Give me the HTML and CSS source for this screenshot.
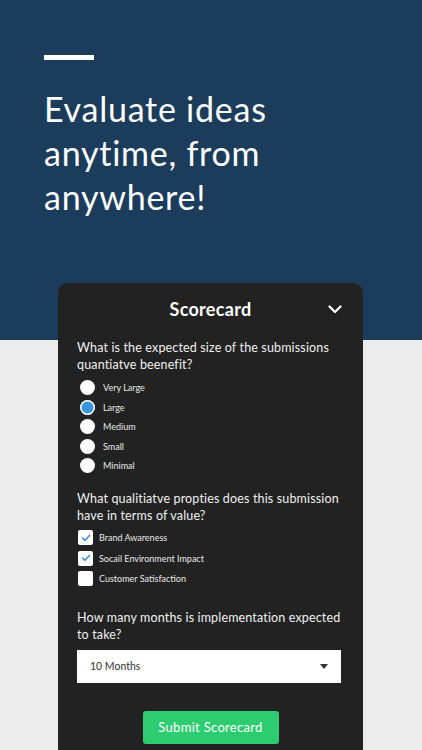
FILE: index.html
```html
<!DOCTYPE html>
<html>
<head>
<meta charset="utf-8">
<link rel="stylesheet" href="styles.css">
</head>
<body>
<div class="page">
  <header class="hero">
    <div class="bar"></div>
    <h1 class="headline">Evaluate ideas<br>anytime, from<br>anywhere!</h1>
  </header>
  <section class="card">
    <div class="card-head">
      <h2 class="card-title">Scorecard</h2>
      <svg class="chev" width="14" height="9" viewBox="0 0 14 9"><path d="M1.5 1.5 L7 7 L12.5 1.5" fill="none" stroke="#fff" stroke-width="2.2" stroke-linecap="round" stroke-linejoin="round"/></svg>
    </div>
    <p class="q">What is the expected size of the submissions quantiatve beenefit?</p>
    <ul class="radios">
      <li class="opt"><span class="radio"></span>Very Large</li>
      <li class="opt"><span class="radio on"></span>Large</li>
      <li class="opt"><span class="radio"></span>Medium</li>
      <li class="opt"><span class="radio"></span>Small</li>
      <li class="opt"><span class="radio"></span>Minimal</li>
    </ul>
    <p class="q q2">What qualitiatve propties does this submission have in terms of value?</p>
    <ul class="checks">
      <li class="copt"><span class="box"><svg width="10" height="8" viewBox="0 0 10 8"><path d="M1.5 4 L4 6.3 L8.5 1.5" fill="none" stroke="#3a8fd6" stroke-width="1.6" stroke-linecap="round" stroke-linejoin="round"/></svg></span>Brand Awareness</li>
      <li class="copt"><span class="box"><svg width="10" height="8" viewBox="0 0 10 8"><path d="M1.5 4 L4 6.3 L8.5 1.5" fill="none" stroke="#3a8fd6" stroke-width="1.6" stroke-linecap="round" stroke-linejoin="round"/></svg></span>Socail Environment Impact</li>
      <li class="copt"><span class="box"></span>Customer Satisfaction</li>
    </ul>
    <p class="q q3">How many months is implementation expected to take?</p>
    <div class="select"><span>10 Months</span><span class="caret"></span></div>
    <div class="actions"><button class="submit">Submit Scorecard</button></div>
  </section>
</div>
</body>
</html>
```
FILE: styles.css
```css
* { box-sizing: border-box; }
html, body { margin: 0; padding: 0; }
body {
  width: 422px;
  height: 750px;
  overflow: hidden;
  background: #ececec;
  font-family: Lato, "Open Sans", sans-serif;
}
.page { position: relative; }
.hero {
  background: #1b3c5b;
  height: 340px;
  padding: 55px 0 0 44px;
}
.bar { width: 50px; height: 5px; background: #fff; }
.headline {
  margin: 27px 0 0;
  color: #fff;
  font-weight: 400;
  font-size: 34px;
  line-height: 44px;
  letter-spacing: 0.75px;
}
.card {
  position: absolute;
  top: 283px;
  left: 58px;
  width: 305px;
  height: 480px;
  background: #222222;
  border-radius: 10px;
  padding: 14px 22px 0 19px;
  color: #fff;
}
.card-head {
  display: flex;
  justify-content: center;
  align-items: center;
  position: relative;
  height: 24px;
  margin-right: -3px;
}
.card-title { margin: 0; font-size: 18px; font-weight: 700; letter-spacing: 0.3px; }
.chev { position: absolute; right: 2px; top: 8px; }
.q {
  margin: 18px 0 0;
  font-size: 12.5px;
  line-height: 17px;
  color: #f0f0f0;
  letter-spacing: 0.15px;
}
.radios, .checks { list-style: none; margin: 0; padding: 0; }
.radios { margin-top: 5px; }
.opt {
  display: flex;
  align-items: center;
  height: 19.5px;
  font-size: 9px;
  color: #e8e8e8;
}
.radio {
  width: 15px; height: 15px; border-radius: 50%;
  background: #fff;
  margin: 0 8px 0 3px;
}
.radio.on { background: #3a95e0; box-shadow: inset 0 0 0 1.5px #fff; }
.q2 { margin-top: 14px; }
.checks { margin-top: 4px; }
.copt {
  display: flex;
  align-items: center;
  height: 20.5px;
  font-size: 9px;
  color: #e8e8e8;
}
.box {
  width: 15px; height: 15px; background: #fff; border-radius: 2px;
  margin: 0 6px 0 1px;
  display: flex; align-items: center; justify-content: center;
}
.q3 { margin-top: 20px; }
.select {
  margin-top: 6.5px;
  height: 33px;
  background: #fff;
  display: flex;
  align-items: center;
  justify-content: space-between;
  padding: 0 13px 0 13px;
  color: #333;
  font-size: 10.5px;
}
.caret {
  width: 0; height: 0;
  border-left: 4.5px solid transparent;
  border-right: 4.5px solid transparent;
  border-top: 5px solid #333;
}
.actions { display: flex; justify-content: center; margin-top: 28px; margin-right: -3px; }
.submit {
  width: 136px; height: 33px;
  background: #2ecc71;
  border: none; border-radius: 3px;
  color: #fff;
  font-family: Lato, sans-serif;
  font-size: 13px;
  letter-spacing: 0.3px;
}
```
